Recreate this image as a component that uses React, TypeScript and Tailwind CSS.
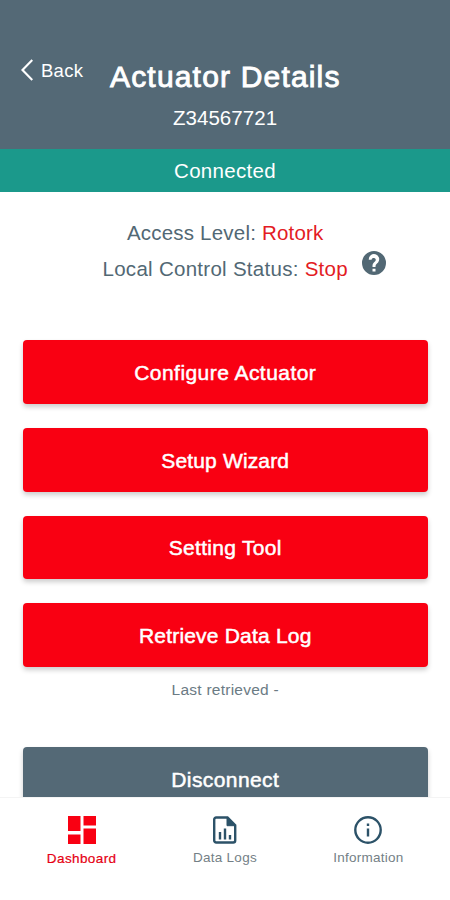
import React from "react";

interface Action {
  label: string;
  tracking: string;
}

interface TabProps {
  label: string;
  className: string;
  children: React.ReactNode;
}

const actions: Action[] = [
  { label: "Configure Actuator", tracking: "tracking-[0.45px]" },
  { label: "Setup Wizard", tracking: "tracking-[0.15px]" },
  { label: "Setting Tool", tracking: "tracking-[0.3px]" },
  { label: "Retrieve Data Log", tracking: "tracking-[0.2px]" },
];

const Tab = ({ label, className, children }: TabProps) => (
  <button className="flex flex-1 flex-col items-center gap-1">
    {children}
    <span className={`whitespace-nowrap leading-5 ${className}`}>{label}</span>
  </button>
);

const App = () => {
  return (
    <div className="flex h-[900px] w-[450px] flex-col overflow-hidden bg-white font-['Liberation_Sans',Arial,sans-serif] text-[#526874]">
      <header className="grid h-[149px] shrink-0 grid-cols-[110px_231px_109px] content-start bg-[#546976] pt-[58px] text-white">
        <button className="flex h-6 items-center gap-2 pl-[21px]">
          <svg width="12" height="22" viewBox="0 0 12 22" fill="none">
            <path d="M11.3 1 1.5 11l9.8 10" stroke="currentColor" strokeWidth="2.2" />
          </svg>
          <span className="pt-[2px] text-[18.5px] leading-6 tracking-[0.25px]">Back</span>
        </button>
        <h1 className="whitespace-nowrap pt-px text-[30px] leading-9 tracking-[1.18px] [-webkit-text-stroke:0.9px]">
          Actuator Details
        </h1>
        <p className="col-span-3 mt-[11px] text-center text-[20.5px] leading-6 tracking-[0.05px]">
          Z34567721
        </p>
      </header>
      <div className="h-[43px] shrink-0 bg-[#1b998b] text-center text-[20.5px] leading-[44px] tracking-[0.3px] text-white">
        Connected
      </div>
      <main className="flex min-h-0 flex-1 flex-col overflow-hidden pl-[22.5px] pr-[22px]">
        <p className="mt-[29px] text-center text-[20.5px] leading-6 tracking-[0.2px]">
          Access Level: <span className="text-[#e31b23]">Rotork</span>
        </p>
        <div className="mt-2 flex h-8 shrink-0 items-center pl-20">
          <p className="w-[246px] whitespace-nowrap text-[20.5px] leading-8 tracking-[0.28px]">
            Local Control Status: <span className="text-[#e31b23]">Stop</span>
          </p>
          <svg className="-mt-3 ml-[13px]" width="24" height="24" viewBox="0 0 24 24" fill="currentColor">
            <path d="M12 0a12 12 0 1 0 0 24 12 12 0 0 0 0-24Zm1.5 20.4h-3v-2.7h3v2.7Zm2.6-9-1.1 1.1c-.9.9-1.5 1.6-1.5 3.4h-3V15c0-1.3.5-2.5 1.4-3.4l1.5-1.5a2.1 2.1 0 1 0-3.9-1.4H6.8a5.2 5.2 0 1 1 9.3 2.7Z" />
          </svg>
        </div>
        <div className="mt-[55px] flex shrink-0 flex-col gap-6">
          {actions.map(({ label, tracking }) => (
            <button
              key={label}
              className={`h-[63.8px] rounded bg-[#f90012] pt-[2px] text-[21px] leading-6 text-white shadow-[0_3px_5px_rgba(0,0,0,0.2)] [-webkit-text-stroke:0.5px] ${tracking}`}
            >
              {label}
            </button>
          ))}
        </div>
        <p className="mt-[11px] text-center text-[15.5px] leading-6 tracking-[0.25px] text-[#6b7b84]">
          Last retrieved -
        </p>
        <button className="mt-[45px] h-16 shrink-0 rounded bg-[#546976] pt-[2px] text-[21px] tracking-[0.4px] text-white shadow-[0_3px_5px_rgba(0,0,0,0.2)] [-webkit-text-stroke:0.5px]">
          Disconnect
        </button>
      </main>
      <nav className="flex h-[103px] shrink-0 border-t border-[#f4f4f4] bg-white px-[10px] pt-[18px]">
        <Tab
          label="Dashboard"
          className="pt-px text-[13.5px] tracking-[0.4px] text-[#e60012] [-webkit-text-stroke:0.2px]"
        >
          <svg width="28" height="28" viewBox="0 0 28 28" fill="#f90012">
            <path d="M0 0h12.5v15H0zM15.5 0H28v9.5H15.5zM0 18.5h12.5V28H0zM15.5 12.5H28V28H15.5z" />
          </svg>
        </Tab>
        <Tab label="Data Logs" className="text-[13.5px] tracking-[0.25px] text-[#747f86]">
          <svg width="28" height="28" viewBox="0 0 28 28" fill="none" stroke="#2c5268" strokeWidth="2.4">
            <path d="M5.2 1.5h11.3l7.7 7.7v15.3a2 2 0 0 1-2 2H5.2a2 2 0 0 1-2-2v-21a2 2 0 0 1 2-2Z" />
            <path d="m16 1.5 8.2 8.2H16Z" fill="#2c5268" strokeWidth="1" />
            <path d="M9 16v7.5M14 12.5v11M19 19v4.5" />
          </svg>
        </Tab>
        <Tab label="Information" className="text-[13.5px] tracking-[0.25px] text-[#747f86]">
          <svg width="28" height="28" viewBox="0 0 28 28" fill="none" stroke="#2c5268" strokeWidth="2.4">
            <circle cx="14" cy="14" r="12.7" />
            <path d="M14 12.5v8M14 7.5v2.5" />
          </svg>
        </Tab>
      </nav>
    </div>
  );
};

export default App;
